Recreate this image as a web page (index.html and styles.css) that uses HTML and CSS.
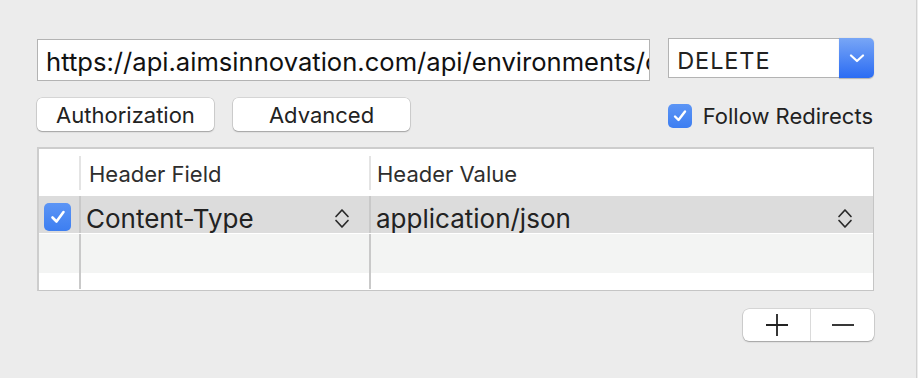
FILE: index.html
```html
<!DOCTYPE html>
<html>
<head>
<meta charset="utf-8">
<link rel="stylesheet" href="styles.css">
</head>
<body>
<div class="window">
  <div class="panel">
    <div class="row-top">
      <div class="url-field">https://api.aimsinnovation.com/api/environments/c</div>
      <div class="popup">
        <span class="popup-label">DELETE</span>
        <span class="popup-arrow">
          <svg width="16" height="9" viewBox="0 0 16 9"><path d="M2 1.5 L8 7 L14 1.5" fill="none" stroke="#fff" stroke-width="2.2" stroke-linecap="round" stroke-linejoin="round"/></svg>
        </span>
      </div>
    </div>
    <div class="row-buttons">
      <button class="btn">Authorization</button>
      <button class="btn">Advanced</button>
      <label class="follow">
        <span class="check small">
          <svg width="16" height="14" viewBox="0 0 16 14"><path d="M3 7.5 L6.5 11 L13 2.5" fill="none" stroke="#fff" stroke-width="2.4" stroke-linecap="round" stroke-linejoin="round"/></svg>
        </span>
        <span class="follow-text">Follow Redirects</span>
      </label>
    </div>
    <div class="table">
      <div class="thead">
        <div class="th th-check"></div>
        <div class="th th-field"><span>Header Field</span></div>
        <div class="th th-value"><span>Header Value</span></div>
      </div>
      <div class="tr selected">
        <div class="td td-check">
          <span class="check big">
            <svg width="18" height="16" viewBox="0 0 18 16"><path d="M3.5 8.5 L7.5 12.5 L14.5 3" fill="none" stroke="#fff" stroke-width="2.6" stroke-linecap="round" stroke-linejoin="round"/></svg>
          </span>
        </div>
        <div class="td td-field"><span class="cell-text">Content-Type</span><svg class="stepper" width="16" height="21" viewBox="0 0 16 21"><path d="M2 8.5 L8 2 L14 8.5 M2 12.5 L8 19 L14 12.5" fill="none" stroke="#2a2a2a" stroke-width="1.7" stroke-linecap="round" stroke-linejoin="round"/></svg></div>
        <div class="td td-value"><span class="cell-text">application/json</span><svg class="stepper" width="16" height="21" viewBox="0 0 16 21"><path d="M2 8.5 L8 2 L14 8.5 M2 12.5 L8 19 L14 12.5" fill="none" stroke="#2a2a2a" stroke-width="1.7" stroke-linecap="round" stroke-linejoin="round"/></svg></div>
      </div>
      <div class="tr alt">
        <div class="td td-check"></div>
        <div class="td td-field"></div>
        <div class="td td-value"></div>
      </div>
      <div class="tr last">
        <div class="td td-check"></div>
        <div class="td td-field"></div>
        <div class="td td-value"></div>
      </div>
    </div>
    <div class="row-seg">
      <div class="segmented">
        <button class="seg">
          <svg width="22" height="22" viewBox="0 0 22 22"><path d="M11 0 V22 M0 11 H22" stroke="#222" stroke-width="1.8"/></svg>
        </button>
        <button class="seg">
          <svg width="22" height="22" viewBox="0 0 22 22"><path d="M0 11 H22" stroke="#222" stroke-width="1.8"/></svg>
        </button>
      </div>
    </div>
  </div>
</div>
</body>
</html>
```
FILE: styles.css
```css
html, body {
  margin: 0;
  padding: 0;
  background: #ececec;
  font-family: "Inter", "Helvetica Neue", "Liberation Sans", sans-serif;
  color: #222;
}
.window {
  width: 917px;
  height: 378px;
  border-right: 1px solid #d2d2d2;
  box-sizing: border-box;
  background: #ececec;
}
.panel {
  padding: 38px 42px 0 37px;
  box-sizing: border-box;
}
.row-top {
  display: flex;
  align-items: flex-start;
  gap: 18px;
  height: 43px;
}
.url-field {
  margin-top: 1px;
  width: 614px;
  height: 42px;
  box-sizing: border-box;
  border: 1px solid #b3b3b3;
  background: #fff;
  font-size: 25.6px;
  line-height: 44px;
  padding-left: 8px;
  white-space: nowrap;
  overflow: hidden;
  color: #111;
}
.popup {
  display: flex;
  width: 206px;
  height: 40px;
  box-sizing: border-box;
}
.popup-label {
  flex: 1;
  background: #fff;
  border: 1px solid #b3b3b3;
  border-right: none;
  font-size: 23.5px;
  letter-spacing: 0.9px;
  line-height: 38px;
  padding: 3px 0 0 8px;
  box-sizing: border-box;
  color: #222;
}
.popup-arrow {
  width: 35px;
  display: flex;
  align-items: center;
  justify-content: center;
  background: linear-gradient(#78a6f6, #2b6cf3);
  border-radius: 0 5px 5px 0;
  box-shadow: 0 0.5px 1px rgba(0,0,0,0.25);
}
.row-buttons {
  display: flex;
  align-items: center;
  gap: 19px;
  margin-top: 17px;
  height: 33px;
}
.btn {
  width: 177px;
  height: 33px;
  background: #fff;
  border: none;
  border-radius: 5px;
  box-shadow: 0 0 0 0.5px rgba(0,0,0,0.18), 0 1px 1.5px rgba(0,0,0,0.25);
  font-family: inherit;
  font-size: 22px;
  color: #222;
  padding: 0;
}
.follow {
  margin-left: auto;
  display: flex;
  align-items: center;
  gap: 11px;
  margin-right: 1px;
  padding-top: 2px;
}
.check {
  display: flex;
  align-items: center;
  justify-content: center;
  background: linear-gradient(#5c95f5, #3d7ef1);
  border-radius: 5px;
  box-sizing: border-box;
}
.check.small {
  width: 24px;
  height: 24px;
}
.check.big {
  width: 27px;
  height: 28px;
  border-radius: 5px;
}
.follow-text {
  font-size: 22px;
  color: #222;
}
.table {
  margin-top: 16px;
  border: 1px solid #c5c5c5;
  border-top: 2px solid #cdcdcd;
  border-left: 2px solid #cdcdcd;
  background: #fff;
  height: 144px;
  box-sizing: border-box;
  overflow: hidden;
}
.thead {
  display: flex;
  height: 47px;
  background: #fff;
}
.th {
  display: flex;
  align-items: center;
  font-size: 22px;
  color: #2e2e2e;
}
.th-check { width: 40px; }
.th-field {
  width: 290px;
  border-left: 2px solid #e4e4e4;
  padding: 1px 0 0 8px;
  box-sizing: border-box;
  margin: 7px 0 6px;
}
.th-value {
  flex: 1;
  border-left: 2px solid #e4e4e4;
  padding: 1px 0 0 6px;
  margin: 7px 0 6px;
}
.tr {
  display: flex;
}
.tr.selected {
  height: 38px;
  background: #dcdcdc;
  border-bottom: 1px solid #fff;
  box-sizing: border-box;
}
.tr.alt {
  height: 39px;
  background: #f3f4f3;
}
.tr.last {
  height: 16px;
  background: #fff;
}
.td {
  display: flex;
  align-items: center;
  box-sizing: border-box;
}
.td-check {
  width: 40px;
  padding-left: 5px;
  padding-top: 4px;
}
.td-field {
  width: 290px;
  border-left: 2px solid #c9c9c9;
  padding-left: 5px;
  padding-right: 19px;
  justify-content: space-between;
  font-size: 26px;
  color: #222;
}
.td-value {
  flex: 1;
  border-left: 2px solid #c9c9c9;
  padding-left: 5px;
  padding-right: 20px;
  justify-content: space-between;
  font-size: 26px;
  color: #222;
}
.cell-text {
  padding-top: 7px;
}
.stepper {
  flex: none;
  align-self: flex-start;
  margin-top: 12px;
}
.row-seg {
  display: flex;
  justify-content: flex-end;
  margin-top: 18px;
}
.segmented {
  display: flex;
  width: 131px;
  height: 32px;
  background: #fff;
  border-radius: 6px;
  box-shadow: 0 0 0 0.5px rgba(0,0,0,0.18), 0 1px 1.5px rgba(0,0,0,0.25);
}
.seg {
  background: transparent;
  border: none;
  padding: 0;
  display: flex;
  align-items: center;
  justify-content: center;
}
.seg:first-child {
  width: 68px;
  border-right: 1px solid #dadada;
}
.seg:last-child {
  flex: 1;
}
```
